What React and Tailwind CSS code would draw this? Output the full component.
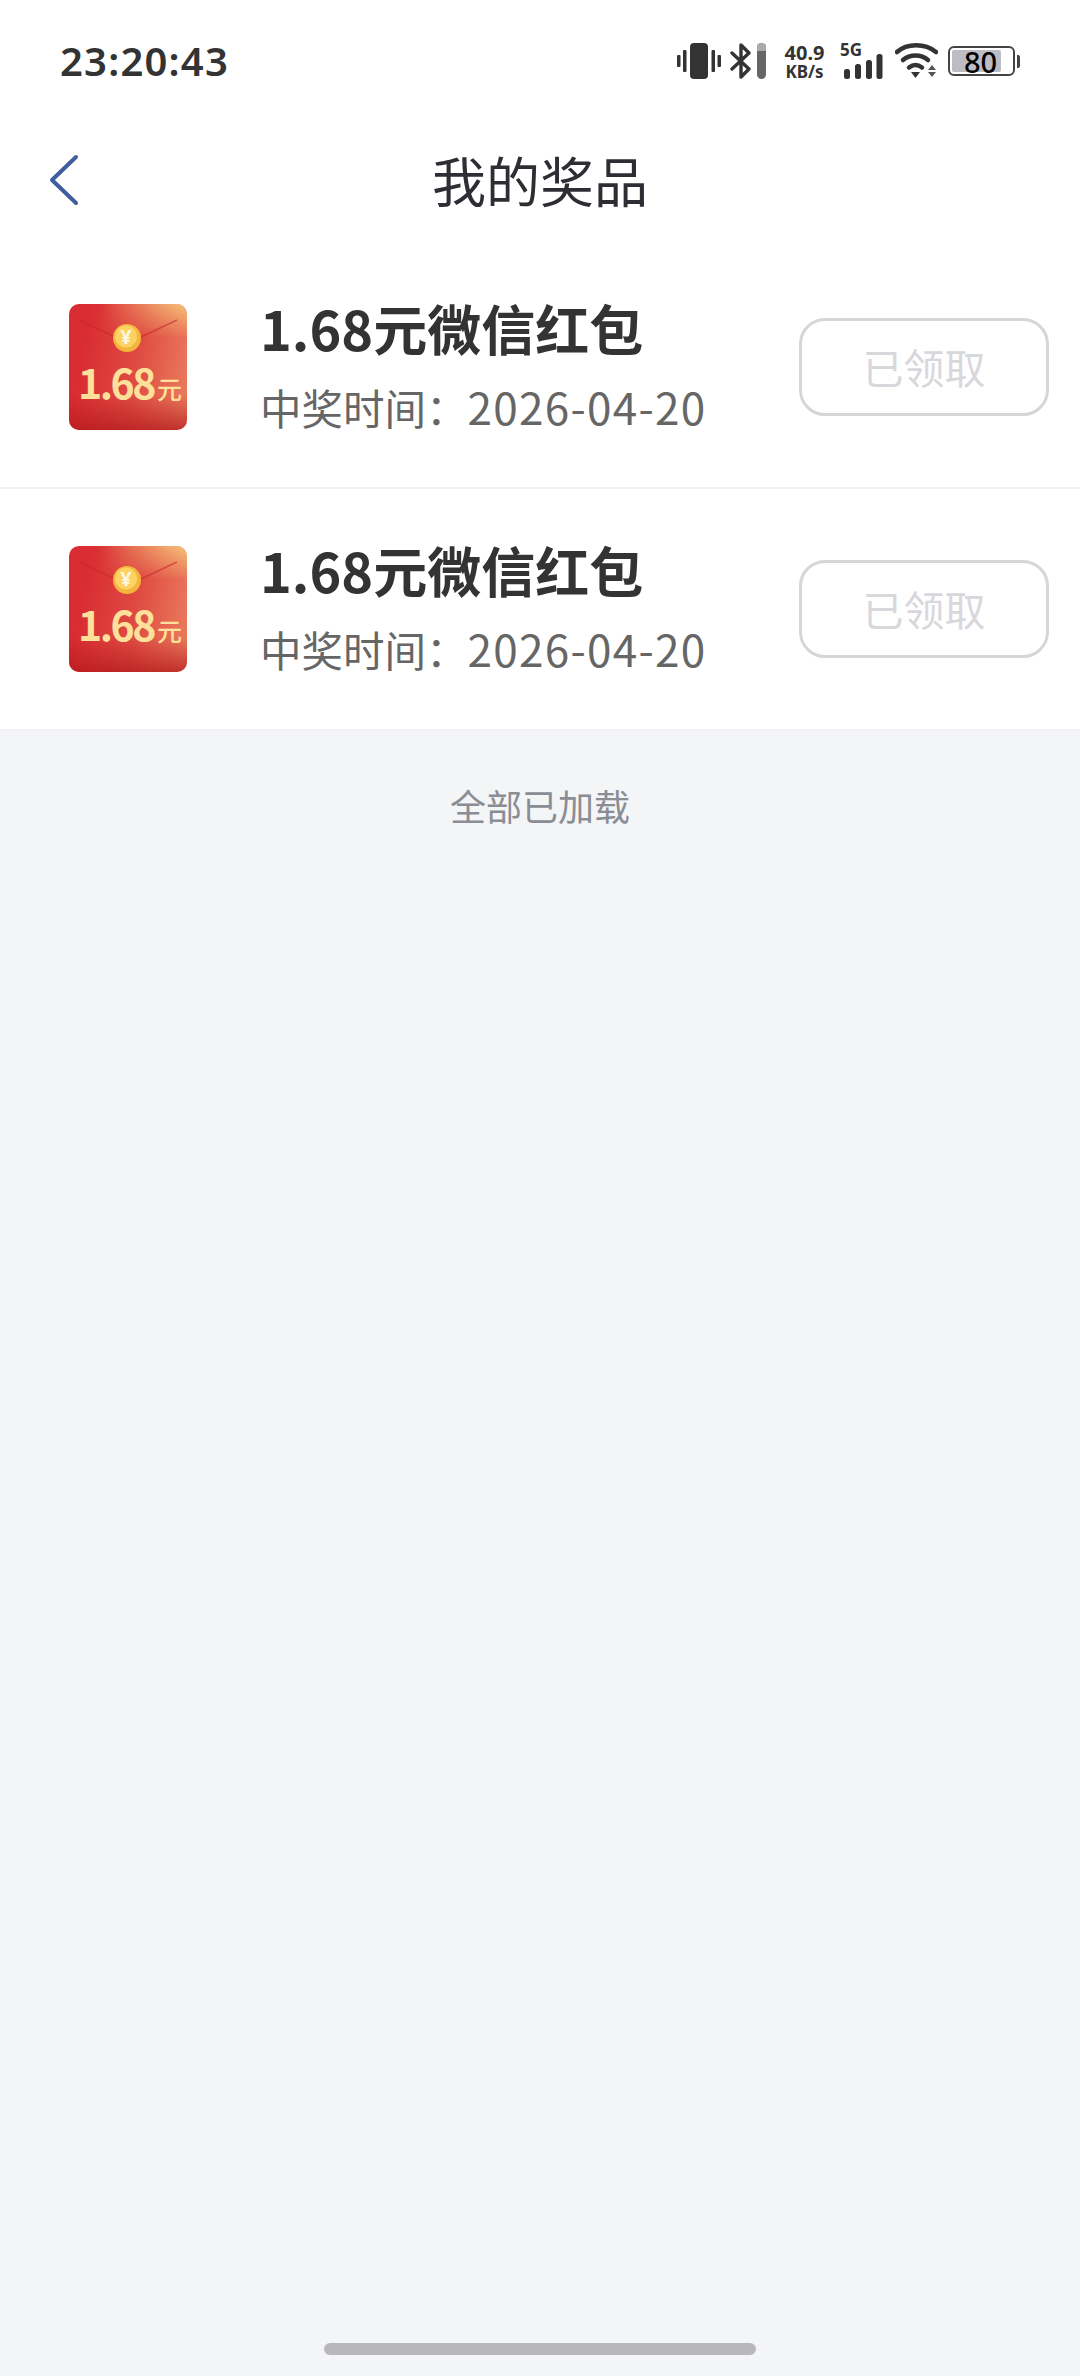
const cjk = { fontFamily: '"Noto Sans CJK SC", "Noto Sans", sans-serif' }
const latin = { fontFamily: '"Noto Sans", sans-serif' }

function StatusIcons() {
  return (
    <div className="flex items-center">
      {/* vibrate */}
      <svg width="44" height="36" viewBox="0 0 44 36" fill="#333">
        <rect x="0" y="12" width="3.500" height="12" rx="1" />
        <rect x="6" y="7" width="3.500" height="22" rx="1" />
        <rect x="13" y="0" width="18" height="36" rx="4" />
        <rect x="34.500" y="7" width="3.500" height="22" rx="1" />
        <rect x="40.500" y="12" width="3.500" height="12" rx="1" />
      </svg>
      {/* bluetooth + battery level */}
      <svg width="36" height="36" viewBox="0 0 36 36" className="ml-[9px]">
        <path d="M2 10 L19 26 L11 34 V2 L19 10 L2 26" fill="none" stroke="#333" strokeWidth="3.400" strokeLinejoin="round" strokeLinecap="round" />
        <rect x="27" y="0" width="9" height="36" rx="4.500" fill="#666" />
        <path d="M27 8 V4.500 A4.500 4.500 0 0 1 36 4.500 V8 Z" fill="#aaa" />
      </svg>
      <div className="ml-[16px] w-[45px] flex flex-col items-center font-bold text-[#333] text-[20px] leading-[21px]" style={latin}>
        <span>40.9</span>
        <span className="text-[17px] leading-[17px]">KB/s</span>
      </div>
      {/* 5G signal */}
      <div className="ml-[15px] relative w-[41px] h-[36px]">
        <span className="absolute left-[-2px] top-[-3px] text-[17px] leading-[20px] font-bold text-[#333]" style={latin}>5G</span>
        <svg width="41" height="36" viewBox="0 0 41 36" fill="#333">
          <rect x="2" y="26" width="6" height="10" rx="2.500" />
          <rect x="13" y="21" width="6" height="15" rx="2.500" />
          <rect x="24" y="17" width="6" height="19" rx="2.500" />
          <rect x="34.500" y="11" width="6" height="25" rx="2.500" />
        </svg>
      </div>
      {/* wifi */}
      <svg width="43" height="36" viewBox="0 0 43 36" className="ml-[12px]">
        <path d="M2 9 C12 0 30 0 41 9" fill="none" stroke="#333" strokeWidth="4.500" strokeLinecap="round" />
        <path d="M8 17 C15 11 26 11 33 17" fill="none" stroke="#333" strokeWidth="4.500" strokeLinecap="round" />
        <path d="M14 24.500 C18 21.500 23 21.500 27 24.500" fill="none" stroke="#333" strokeWidth="4.500" strokeLinecap="round" />
        <path d="M16 29 H25 L20.500 35 Z" fill="#333" />
        <path d="M37 22 L41 27 H33 Z M33 29 H41 L37 34 Z" fill="#555" />
      </svg>
      {/* battery */}
      <div className="ml-[10px] flex items-center">
        <div className="w-[67px] h-[30px] rounded-[6px] border-2 border-[#444] p-[2px] flex">
          <div className="w-[49px] h-full bg-[#bcbcc2] rounded-[2px] flex items-center justify-center text-black text-[29px] leading-none font-medium" style={latin}>
            <span className="ml-[8px]">80</span>
          </div>
        </div>
        <div className="ml-[2px] w-[3px] h-[13px] bg-[#444] rounded-r-[2px]" />
      </div>
    </div>
  )
}

function RedPacket() {
  return (
    <div className="relative w-[118px] h-[126px] rounded-[10px] overflow-hidden bg-[linear-gradient(100deg,#d92c33_15%,#df4a42_55%,#ea7a5c_95%)]">
      <div className="absolute inset-0 bg-[linear-gradient(180deg,rgba(0,0,0,0)_72%,rgba(180,25,28,0.75)_100%)]" />
      <div className="absolute inset-x-0 top-0 h-[34px] bg-[linear-gradient(100deg,rgba(245,170,100,0)_25%,rgba(248,205,125,0.95)_100%)] [mask-image:linear-gradient(180deg,#000_0%,transparent_100%)]" />
      <svg className="absolute left-0 top-0" width="118" height="52" viewBox="0 0 118 52">
        <path d="M10 16 L46 33 M108 16 L72 33" stroke="#c8272c" strokeWidth="1.500" fill="none" opacity="0.6" />
        <circle cx="58" cy="34" r="14" fill="#f4b53c" />
        <circle cx="57" cy="32.500" r="11" fill="#fcd263" />
        <text x="57" y="40" textAnchor="middle" fontSize="20" fontWeight="700" fill="#fff6dc" fontFamily="Noto Sans">¥</text>
      </svg>
      <div className="absolute left-[9px] top-[53px] flex items-baseline text-[#fde09a] font-bold" style={cjk}>
        <span className="text-[41px] leading-[48px] tracking-[-2.500px]">1.68</span>
        <span className="text-[25px] leading-[48px] ml-[3px] font-medium">元</span>
      </div>
    </div>
  )
}

function PrizeRow() {
  return (
    <div className="h-[242px] bg-white border-b-2 border-[#f2f2f4] flex items-center pl-[69px] pr-[31px]">
      <RedPacket />
      <div className="ml-[73px] flex-1">
        <div className="text-[54px] leading-[62px] font-bold text-[#333] -mt-[6px]" style={cjk}>1.68元微信红包</div>
        <div className="mt-[22px] text-[41.500px] leading-[50px] text-[#666]" style={cjk}>
          中奖时间：<span className="text-[44px] tracking-[1.300px]">2026-04-20</span>
        </div>
      </div>
      <button className="w-[250px] h-[98px] rounded-[26px] border-[3px] border-[#d6d6d8] text-[41px] text-[#d8d8dc]" style={cjk}>已领取</button>
    </div>
  )
}

export default function App() {
  return (
    <div className="relative w-[1080px] h-[2376px] bg-[#f4f5f7] overflow-hidden" style={cjk}>
      <div className="bg-white">
        <div className="h-[122px] pl-[60px] pr-[60px] flex items-center justify-between">
          <span className="text-[40px] font-semibold text-[#333] tracking-[1.200px]" style={latin}>23:20:43</span>
          <StatusIcons />
        </div>
        <div className="relative h-[125px] pb-[10px] flex items-center justify-center">
          <svg className="absolute left-[46px] top-[31px]" width="34" height="54" viewBox="0 0 34 54">
            <path d="M30 4 L6 27 L30 50" fill="none" stroke="#3f5d9f" strokeWidth="4" strokeLinecap="round" strokeLinejoin="round" />
          </svg>
          <h1 className="text-[54px] font-normal text-[#2c2e33]">我的奖品</h1>
        </div>
      </div>
      <PrizeRow />
      <PrizeRow />
      <div className="mt-[51px] text-center text-[36px] leading-[46px] text-[#8a8d94]">全部已加载</div>
      <div className="absolute left-[324px] bottom-[21px] w-[432px] h-[12px] rounded-[6px] bg-[#b8b8ba]" />
    </div>
  )
}
